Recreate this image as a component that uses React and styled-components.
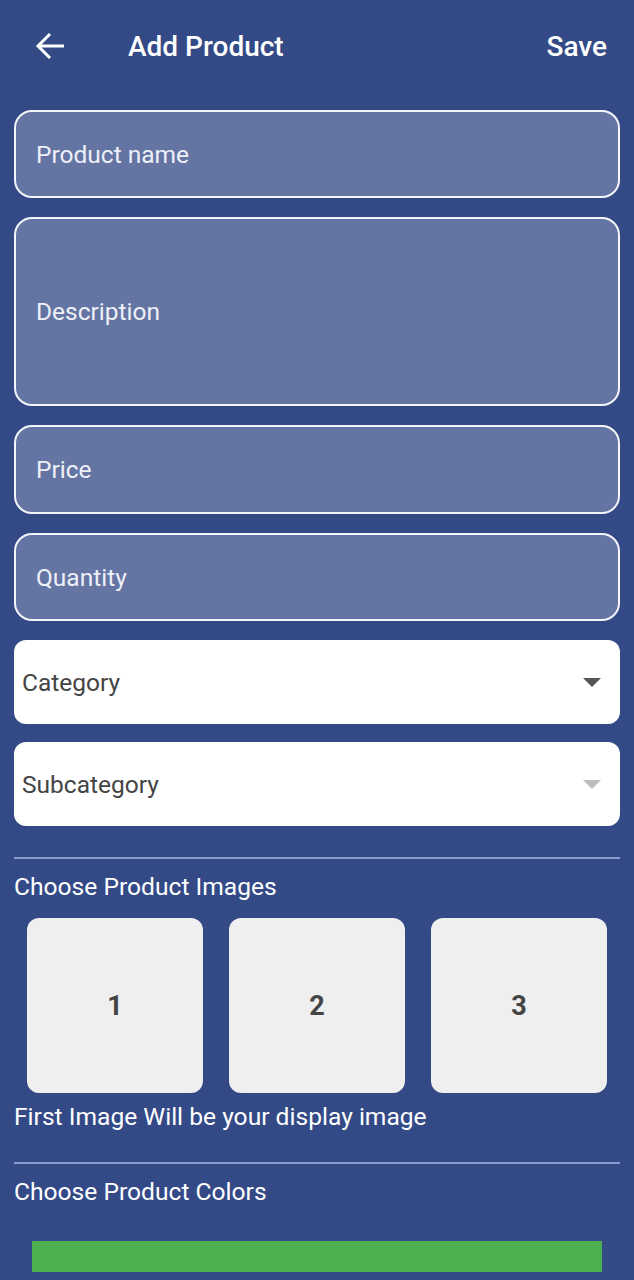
import React from "react";
import styled, { createGlobalStyle } from "styled-components";

const GlobalStyle = createGlobalStyle`
  html, body {
    margin: 0;
    padding: 0;
    background: #334a87;
  }
  body {
    font-family: Roboto, "Noto Sans", sans-serif;
  }
`;

const Page = styled.div`
  width: 634px;
  min-height: 1280px;
  background: #334a87;
  color: #fff;
  overflow: hidden;
`;

const Toolbar = styled.div`
  height: 92px;
  display: flex;
  align-items: center;
  padding: 0 27px 0 35px;
`;

const BackButton = styled.button`
  background: none;
  border: none;
  padding: 0;
  width: 30px;
  height: 30px;
  display: flex;
  align-items: center;
  color: #fff;
`;

const Title = styled.div`
  margin-left: 63px;
  font-size: 28px;
  font-weight: 500;
  flex: 1;
`;

const SaveButton = styled.div`
  font-size: 28px;
  font-weight: 500;
`;

const Form = styled.div`
  padding: 18px 14px 0;
  display: flex;
  flex-direction: column;
`;

const Field = styled.div`
  height: ${(p) => p.h}px;
  box-sizing: border-box;
  border: 2px solid #f4f5fa;
  border-radius: 18px;
  background: #6475a3;
  display: flex;
  align-items: center;
  padding-left: 20px;
  font-size: 24.5px;
  color: #eef0f7;
  margin-bottom: 19px;
`;

const Select = styled.div`
  height: 84px;
  box-sizing: border-box;
  border-radius: 12px;
  background: #fff;
  display: flex;
  align-items: center;
  justify-content: space-between;
  padding: 0 19px 0 8px;
  font-size: 24.5px;
  color: #444;
  margin-bottom: 18px;
`;

const Caret = styled.span`
  width: 0;
  height: 0;
  border-left: 9px solid transparent;
  border-right: 9px solid transparent;
  border-top: 9px solid ${(p) => (p.disabled ? "#bdbdbd" : "#555")};
`;

const Divider = styled.div`
  height: 2px;
  background: #8a9bd0;
  margin-top: ${(p) => p.top}px;
`;

const SectionLabel = styled.div`
  font-size: 24.6px;
  line-height: 29px;
  font-weight: 400;
  color: #fff;
  margin-top: 13px;
`;

const Tiles = styled.div`
  display: grid;
  grid-template-columns: repeat(3, 176px);
  column-gap: 26px;
  padding-left: 13px;
  margin-top: 17px;
`;

const Tile = styled.div`
  height: 175px;
  background: #efefef;
  border-radius: 12px;
  display: flex;
  align-items: center;
  justify-content: center;
  font-size: 27px;
  font-weight: 700;
  color: #444;
`;

const Hint = styled.div`
  font-size: 24.6px;
  line-height: 29px;
  margin-top: 9px;
`;

const ColorBar = styled.div`
  height: 31px;
  margin: 35px 18px 0;
  background: #4caf50;
`;

export default function App() {
  return (
    <Page>
      <GlobalStyle />
      <Toolbar>
        <BackButton aria-label="Back">
          <svg width="30" height="30" viewBox="0 0 30 30" fill="none" stroke="#fff" strokeWidth="3">
            <path d="M3 15H29" />
            <path d="M15 3L3 15l12 12" />
          </svg>
        </BackButton>
        <Title>Add Product</Title>
        <SaveButton>Save</SaveButton>
      </Toolbar>
      <Form>
        <Field h={88}>Product name</Field>
        <Field h={189}>Description</Field>
        <Field h={89}>Price</Field>
        <Field h={88}>Quantity</Field>
        <Select>
          Category
          <Caret />
        </Select>
        <Select>
          Subcategory
          <Caret disabled />
        </Select>
        <Divider top={13} />
        <SectionLabel>Choose Product Images</SectionLabel>
        <Tiles>
          <Tile>1</Tile>
          <Tile>2</Tile>
          <Tile>3</Tile>
        </Tiles>
        <Hint>First Image Will be your display image</Hint>
        <Divider top={31} />
        <SectionLabel>Choose Product Colors</SectionLabel>
        <ColorBar />
      </Form>
    </Page>
  );
}
